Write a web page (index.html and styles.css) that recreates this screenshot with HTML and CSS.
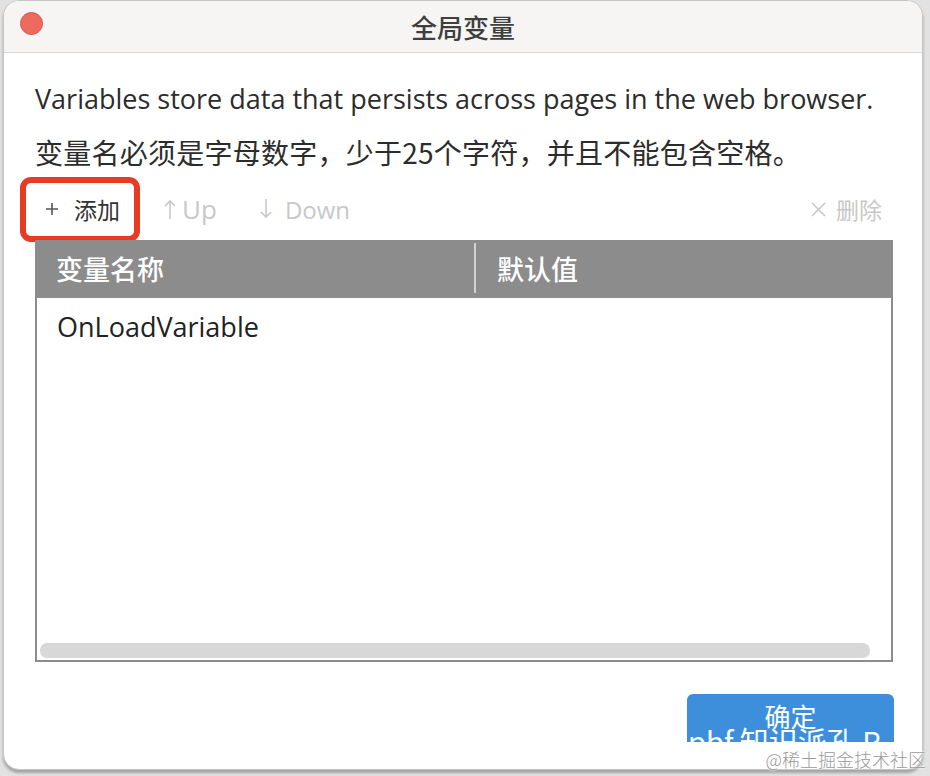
FILE: index.html
```html
<!DOCTYPE html>
<html lang="zh">
<head>
<meta charset="utf-8">
<link rel="stylesheet" href="styles.css">
</head>
<body>
<div class="window">
  <div class="titlebar">
    <span class="close"></span>
    <span class="title">全局变量</span>
  </div>
  <div class="content">
    <div class="desc">
      <p class="en">Variables store data that persists across pages in the web browser.</p>
      <p class="zh">变量名必须是字母数字，少于25个字符，并且不能包含空格。</p>
    </div>
    <div class="toolbar">
      <span class="tool add">
        <svg class="ico plus" width="12" height="16" viewBox="0 0 12 16"><path d="M6 2V14M0 8H12" stroke="#555" stroke-width="1.6" fill="none"/></svg>
        <span class="lbl">添加</span>
      </span>
      <span class="tool off up">
        <svg class="ico" width="12" height="20" viewBox="0 0 12 20"><path d="M6 2V20M1 7L6 2L11 7" stroke="#c8c8c8" stroke-width="1.6" fill="none"/></svg>
        <span class="lbl en">Up</span>
      </span>
      <span class="tool off down">
        <svg class="ico" width="12" height="20" viewBox="0 0 12 20"><path d="M6 0V18M1 13L6 18L11 13" stroke="#c8c8c8" stroke-width="1.6" fill="none"/></svg>
        <span class="lbl en">Down</span>
      </span>
      <span class="spacer"></span>
      <span class="tool off del">
        <svg class="ico" width="15" height="15" viewBox="0 0 15 15"><path d="M1 1L14 14M14 1L1 14" stroke="#c8c8c8" stroke-width="1.6" fill="none"/></svg>
        <span class="lbl">删除</span>
      </span>
      <span class="highlight"></span>
    </div>
    <div class="table">
      <div class="thead">
        <div class="th first">变量名称</div>
        <div class="th">默认值</div>
      </div>
      <div class="tbody">
        <div class="tr">
          <div class="td first">OnLoadVariable</div>
          <div class="td"></div>
        </div>
      </div>
      <div class="scrollbar"></div>
    </div>
    <div class="footer">
      <div class="ok">
        <span class="ok-label">确定</span>
        <span class="ok-ghost">pbf 知识派孔 R</span>
      </div>
    </div>
  </div>
</div>
<span class="watermark">@稀土掘金技术社区</span>
</body>
</html>
```
FILE: styles.css
```css
* { box-sizing: border-box; }
html, body { margin: 0; padding: 0; }
body {
  position: relative;
  width: 930px;
  height: 776px;
  background: #e2e2e2;
  font-family: "Open Sans", "Noto Sans CJK SC", sans-serif;
  overflow: hidden;
}
.window {
  position: relative;
  margin-left: 3px;
  width: 920px;
  height: 770px;
  background: #fff;
  border: 1px solid #c6c6c6;
  border-radius: 16px;
  overflow: hidden;
  box-shadow: 0 3px 3px rgba(0,0,0,0.28);
}
.titlebar {
  position: relative;
  height: 52px;
  background: #f6f5f4;
  border-bottom: 1px solid #d9d9d9;
  display: flex;
  align-items: center;
  justify-content: center;
}
.close {
  position: absolute;
  left: 16px;
  top: 11px;
  width: 23px;
  height: 23px;
  border-radius: 50%;
  background: #ec6a5e;
  border: 1px solid #d9574b;
}
.title {
  font-family: "Noto Sans CJK SC", sans-serif;
  font-size: 26px;
  font-weight: 500;
  color: #3f3f3f;
}
.content {
  padding: 21px 28px 0 31px;
}
.desc p {
  margin: 0;
  line-height: 52px;
  color: #2c2c2c;
  white-space: nowrap;
}
.desc p.en { font-size: 27px; margin-top: -1px; margin-bottom: 1px; }
.desc p.zh { font-family: "Noto Sans CJK SC", sans-serif; font-size: 28px; letter-spacing: 0.25px; }
.toolbar {
  position: relative;
  height: 62px;
  display: flex;
  align-items: center;
  padding: 0 11px 0 11px;
  font-family: "Noto Sans CJK SC", sans-serif;
  font-size: 23px;
}
.tool { display: flex; align-items: center; color: #333; }
.tool .ico { display: block; }
.tool.add .ico { margin-right: 16px; }
.tool.off { color: #c8c8c8; }
.tool.up { margin-left: 44px; }
.tool.up .ico { margin-right: 6px; }
.tool.down .ico { margin-right: 13px; }
.tool.down { margin-left: 43px; }
.tool .lbl.en { font-family: "Open Sans", sans-serif; font-size: 24px; }
.tool.up .lbl.en { font-size: 26px; }
.tool.del .ico { margin-right: 10px; }
.tool.del { margin-right: 1px; }
.spacer { flex: 1; }
.highlight {
  position: absolute;
  left: -15px;
  top: -1px;
  width: 120px;
  height: 65px;
  border: 6px solid #e73b24;
  border-radius: 11px;
}
.table {
  position: relative;
  width: 858px;
  height: 422px;
  border: 2px solid #8c8c8c;
  display: flex;
  flex-direction: column;
}
.thead {
  height: 57px;
  background: #8c8c8c;
  display: flex;
  margin: -1px -1px 0 -1px;
}
.th {
  font-family: "Noto Sans CJK SC", sans-serif;
  font-size: 27px;
  font-weight: 500;
  color: #fff;
  display: flex;
  align-items: center;
  padding-left: 20px;
}
.th.first {
  width: 440px;
  border-right: 2px solid #d2d2d2;
  margin: 2px 0 5px 0;
}
.th:not(.first) { padding-left: 21px; padding-bottom: 3px; }
.tbody { flex: 1; }
.tr { display: flex; height: 56px; align-items: center; }
.td { font-size: 27px; color: #222; padding-left: 20px; }
.td.first { width: 440px; }
.scrollbar {
  margin: 0 21px 2px 3px;
  height: 15px;
  background: #d8d8d8;
  border-radius: 7px;
}
.footer {
  display: flex;
  justify-content: flex-end;
  padding-top: 32px;
}
.ok {
  position: relative;
  width: 207px;
  height: 48px;
  background: #3d8fdb;
  border-radius: 6px 6px 0 0;
  overflow: hidden;
  display: flex;
  justify-content: center;
  color: #fff;
  font-family: "Noto Sans CJK SC", sans-serif;
}
.ok-label { font-size: 26px; line-height: 26px; margin-top: 9px; }
.ok-ghost {
  position: absolute;
  left: 1px;
  top: 28px;
  font-size: 29px;
  line-height: 36px;
  white-space: nowrap;
}
.watermark {
  position: absolute;
  right: 4px;
  bottom: 7px;
  font-family: "Noto Sans CJK SC", serif;
  font-size: 18px;
  font-weight: 300;
  line-height: 20px;
  color: #9a9a9a;
  text-shadow: 0 0 2px #fff, 0 0 2px #fff;
}
```
